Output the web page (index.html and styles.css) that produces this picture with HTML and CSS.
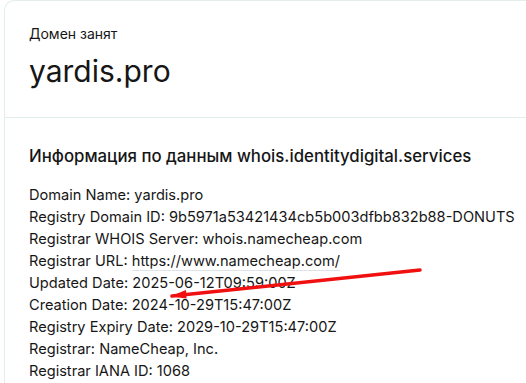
FILE: index.html
```html
<!DOCTYPE html>
<html lang="ru">
<head>
<meta charset="utf-8">
<link rel="stylesheet" href="styles.css">
</head>
<body>
<div class="card">
  <section class="head">
    <div class="status">Домен занят</div>
    <h1 class="domain">yardis.pro</h1>
  </section>
  <section class="whois">
    <h2 class="title">Информация по данным whois.identitydigital.services</h2>
    <div class="lines">
      <div>Domain Name: yardis.pro</div>
      <div>Registry Domain ID: 9b5971a53421434cb5b003dfbb832b88-DONUTS</div>
      <div>Registrar WHOIS Server: whois.namecheap.com</div>
      <div>Registrar URL: <a class="link" href="#">https://www.namecheap.com/</a></div>
      <div>Updated Date: 2025-06-12T09:59:00Z</div>
      <div>Creation Date: 2024-10-29T15:47:00Z</div>
      <div>Registry Expiry Date: 2029-10-29T15:47:00Z</div>
      <div>Registrar: NameCheap, Inc.</div>
      <div>Registrar IANA ID: 1068</div>
    </div>
  </section>
</div>
<svg class="arrow" width="526" height="383" viewBox="0 0 526 383">
  <path d="M420 270 L172 296" stroke="#f01010" stroke-width="3.5" stroke-linecap="round" fill="none"/>
  <path d="M170 296.5 L186 290 L186.5 298.5 Z" fill="#f01010"/>
</svg>
</body>
</html>
```
FILE: styles.css
```css
html, body {
  margin: 0;
  padding: 0;
  background: #ffffff;
}
body {
  font-family: Inter, "Noto Sans", sans-serif;
  color: #161616;
  position: relative;
  width: 526px;
  height: 383px;
  overflow: hidden;
}
.card {
  margin-left: 4px;
  border: 1px solid #e2eded;
  border-right: none;
  border-bottom: none;
  border-top-left-radius: 10px;
  height: 400px;
}
.head {
  padding: 24px 24px 0 24px;
  height: 92px;
  border-bottom: 1px solid #e2eded;
}
.status {
  font-size: 14px;
  line-height: 18px;
}
.domain {
  margin: 10px 0 0 0;
  font-size: 30px;
  font-weight: 400;
  line-height: 36px;
  letter-spacing: 0;
}
.whois {
  padding: 26px 0 0 24px;
}
.title {
  margin: 0 0 16px 0;
  font-size: 16.8px;
  font-weight: 500;
  line-height: 24px;
  white-space: nowrap;
}
.lines {
  font-size: 14.6px;
  line-height: 22px;
  white-space: nowrap;
}
.link {
  color: inherit;
  text-decoration: none;
  border-bottom: 1px solid #dde3e6;
}
.arrow {
  position: absolute;
  left: 0;
  top: 0;
  pointer-events: none;
}
```
